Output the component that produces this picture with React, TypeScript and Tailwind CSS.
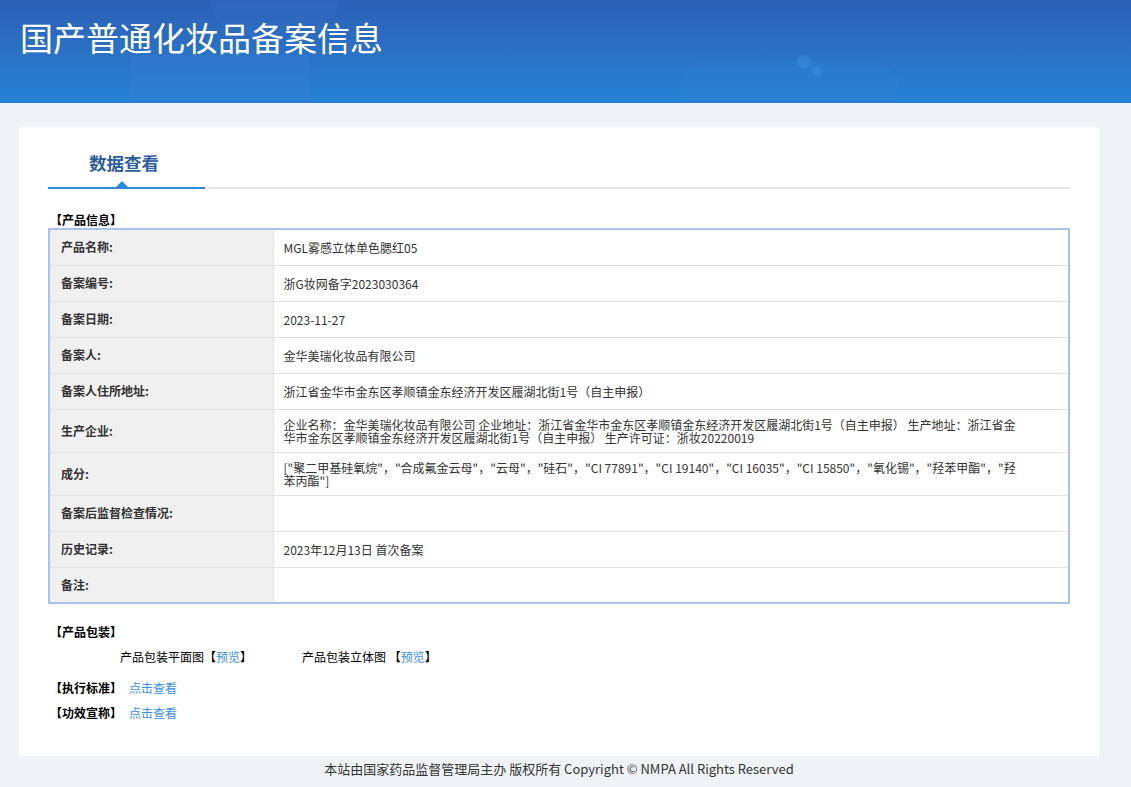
const rows: { label: string; value: string; tall?: boolean }[] = [
  { label: "产品名称:", value: "MGL雾感立体单色腮红05" },
  { label: "备案编号:", value: "浙G妆网备字2023030364" },
  { label: "备案日期:", value: "2023-11-27" },
  { label: "备案人:", value: "金华美瑞化妆品有限公司" },
  { label: "备案人住所地址:", value: "浙江省金华市金东区孝顺镇金东经济开发区履湖北街1号（自主申报）" },
  {
    label: "生产企业:",
    value:
      "企业名称：金华美瑞化妆品有限公司 企业地址：浙江省金华市金东区孝顺镇金东经济开发区履湖北街1号（自主申报） 生产地址：浙江省金华市金东区孝顺镇金东经济开发区履湖北街1号（自主申报） 生产许可证：浙妆20220019",
    tall: true,
  },
  {
    label: "成分:",
    value:
      '["聚二甲基硅氧烷"，"合成氟金云母"，"云母"，"硅石"，"CI 77891"，"CI 19140"，"CI 16035"，"CI 15850"，"氧化锡"，"羟苯甲酯"，"羟苯丙酯"]',
    tall: true,
  },
  { label: "备案后监督检查情况:", value: "" },
  { label: "历史记录:", value: "2023年12月13日 首次备案" },
  { label: "备注:", value: "" },
];

export default function App() {
  return (
    <div
      className="min-h-[787px] bg-[#eff3f6] text-[#333]"
      style={{ fontFamily: '"Noto Sans CJK SC", "Liberation Sans", sans-serif' }}
    >
      {/* Banner */}
      <header className="relative h-[103px] overflow-hidden bg-gradient-to-b from-[#2c60b4] to-[#2682d6]">
        <div className="absolute left-[130px] top-[55px] h-[60px] w-[180px] bg-[#3d7fd8] opacity-30" />
        <div className="absolute left-[210px] top-[-40px] h-[75px] w-[130px] rounded-full bg-[#3a7ad0] opacity-20" />
        <div className="absolute left-[680px] top-[60px] h-[60px] w-[220px] rounded-full bg-[#3189d8] opacity-20" />
        <div className="absolute left-[797px] top-[55px] h-[14px] w-[14px] rounded-full bg-[#3a90e0] opacity-50" />
        <div className="absolute left-[812px] top-[66px] h-[10px] w-[10px] rounded-full bg-[#3a90e0] opacity-50" />
        <h1 className="relative pl-[20px] pt-[16px] text-[33px] leading-[42px] text-white">
          国产普通化妆品备案信息
        </h1>
      </header>

      <main className="pl-[19px] pr-[32px] pt-[24px]">
        <div className="bg-white px-[29px] pb-[34px] pt-[22px]">
          {/* Tab */}
          <div className="relative h-[40px] border-b-2 border-[#e6e6e6]">
            <div className="relative -mb-[2px] flex h-[40px] w-[157px] items-start border-b-2 border-[#2b88db] pl-[41px]">
              <span className="text-[17.5px] font-bold leading-[28px] text-[#2d5da0]">数据查看</span>
              <span className="absolute bottom-0 left-[68px] h-0 w-0 border-x-[6px] border-b-[6px] border-x-transparent border-b-[#2b88db]" />
            </div>
          </div>

          {/* 产品信息 */}
          <div className="mt-[23px] pl-[2px] text-[12px] font-bold leading-[16px] text-black">【产品信息】</div>
          <table className="w-full border-collapse border-2 border-[#a9c3e8] text-[12px]">
            <tbody>
              {rows.map((r) => (
                <tr key={r.label} className={r.tall ? "h-[43px]" : "h-[36px]"}>
                  <td className="w-[224px] border border-[#e2e2e2] bg-[#f0f0f0] pl-[11px] font-bold text-[#333]">
                    {r.label}
                  </td>
                  <td className="border border-[#e2e2e2] pl-[10px] pr-[42px] leading-[13px] text-[#333]">
                    {r.value}
                  </td>
                </tr>
              ))}
            </tbody>
          </table>

          {/* 产品包装 */}
          <div className="mt-[19px] pl-[2px] text-[12px] leading-[18px] text-black">
            <div className="font-bold">【产品包装】</div>
            <div className="mt-[7px] flex">
              <span className="ml-[70px]">
                产品包装平面图【<span className="text-[#3a8ee6]">预览</span>】
              </span>
              <span className="ml-[50px]">
                产品包装立体图 【<span className="text-[#3a8ee6]">预览</span>】
              </span>
            </div>
            <div className="mt-[13px]">
              <span className="font-bold">【执行标准】</span>
              <span className="ml-[7px] text-[#3a8ee6]">点击查看</span>
            </div>
            <div className="mt-[7px]">
              <span className="font-bold">【功效宣称】</span>
              <span className="ml-[7px] text-[#3a8ee6]">点击查看</span>
            </div>
          </div>
        </div>
      </main>

      <footer className="pl-[19px] pr-[32px] py-[4px] text-center text-[13px] leading-[18px] text-[#333]">
        本站由国家药品监督管理局主办 版权所有 Copyright © NMPA All Rights Reserved
      </footer>
    </div>
  );
}
